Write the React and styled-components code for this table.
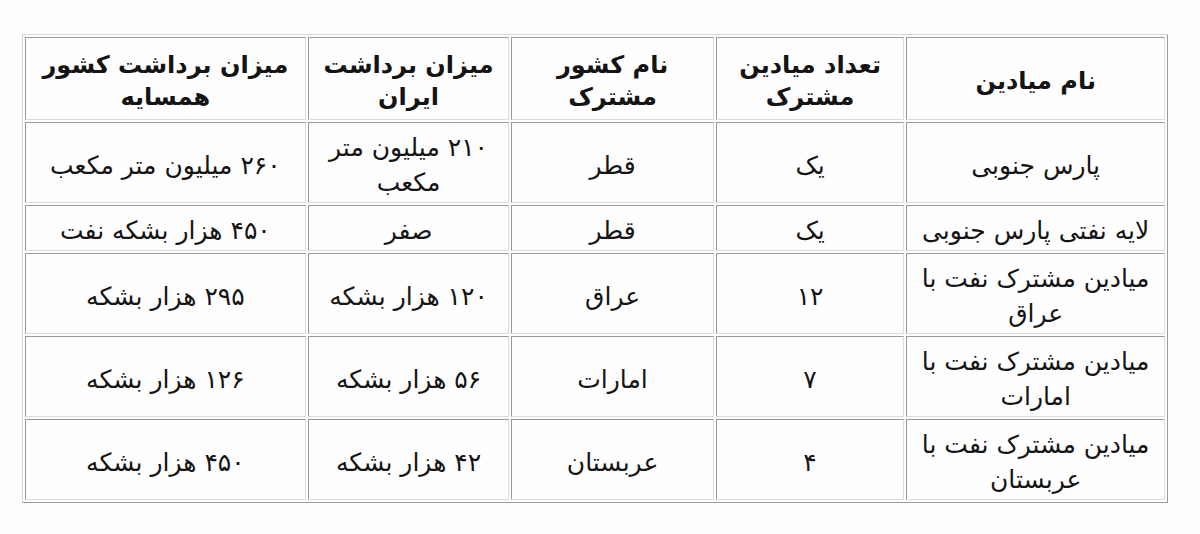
import React from 'react'
import styled, { createGlobalStyle } from 'styled-components'

const Global = createGlobalStyle`
  html, body {
    margin: 0;
    padding: 0;
    background: #ffffff;
  }
`

const Page = styled.div`
  width: 1200px;
  height: 534px;
  padding: 34px 0 0 22px;
  box-sizing: border-box;
  background: #fefefe;
`

const Table = styled.table`
  direction: rtl;
  border-collapse: separate;
  border-spacing: 2px;
  border: 1px solid;
  border-color: #d6d6d6 #9c9c9c #9c9c9c #d6d6d6;
  table-layout: fixed;
  width: 1146px;
  font-family: "DejaVu Sans", "Noto Sans", sans-serif;
  color: #141414;
`

const Row = styled.tr`
  height: ${p => p.h}px;
`

const Cell = styled.td`
  box-sizing: border-box;
  border: 1px solid;
  border-color: #9a9a9a #dcdcdc #dcdcdc #9a9a9a;
  text-align: center;
  vertical-align: middle;
  padding: 5px 4px 0;
  white-space: nowrap;
  font-size: ${p => (p.head ? 24 : 25)}px;
  font-weight: ${p => (p.head ? 700 : 400)};
  line-height: ${p => (p.head ? 32 : 35)}px;
`

const cols = [258, 188, 202, 201, 280]

const header = [
  'نام میادین',
  <>تعداد میادین<br />مشترک</>,
  <>نام کشور<br />مشترک</>,
  <>میزان برداشت<br />ایران</>,
  <>میزان برداشت کشور<br />همسایه</>,
]

const rows = [
  { h: 81, cells: ['پارس جنوبی', 'یک', 'قطر', <>۲۱۰ میلیون متر<br />مکعب</>, '۲۶۰ میلیون متر مکعب'] },
  { h: 46, cells: ['لایه نفتی پارس جنوبی', 'یک', 'قطر', 'صفر', '۴۵۰ هزار بشکه نفت'] },
  { h: 81, cells: [<>میادین مشترک نفت با<br />عراق</>, '۱۲', 'عراق', '۱۲۰ هزار بشکه', '۲۹۵ هزار بشکه'] },
  { h: 81, cells: [<>میادین مشترک نفت با<br />امارات</>, '۷', 'امارات', '۵۶ هزار بشکه', '۱۲۶ هزار بشکه'] },
  { h: 81, cells: [<>میادین مشترک نفت با<br />عربستان</>, '۴', 'عربستان', '۴۲ هزار بشکه', '۴۵۰ هزار بشکه'] },
]

const App = () => {
  return (
    <Page>
      <Global />
      <Table>
        <colgroup>
          {cols.map((w, i) => <col key={i} style={{ width: w }} />)}
        </colgroup>
        <tbody>
          <Row h={83}>
            {header.map((c, i) => <Cell head key={i}>{c}</Cell>)}
          </Row>
          {rows.map((r, i) => (
            <Row h={r.h} key={i}>
              {r.cells.map((c, j) => <Cell key={j}>{c}</Cell>)}
            </Row>
          ))}
        </tbody>
      </Table>
    </Page>
  )
}

export default App
